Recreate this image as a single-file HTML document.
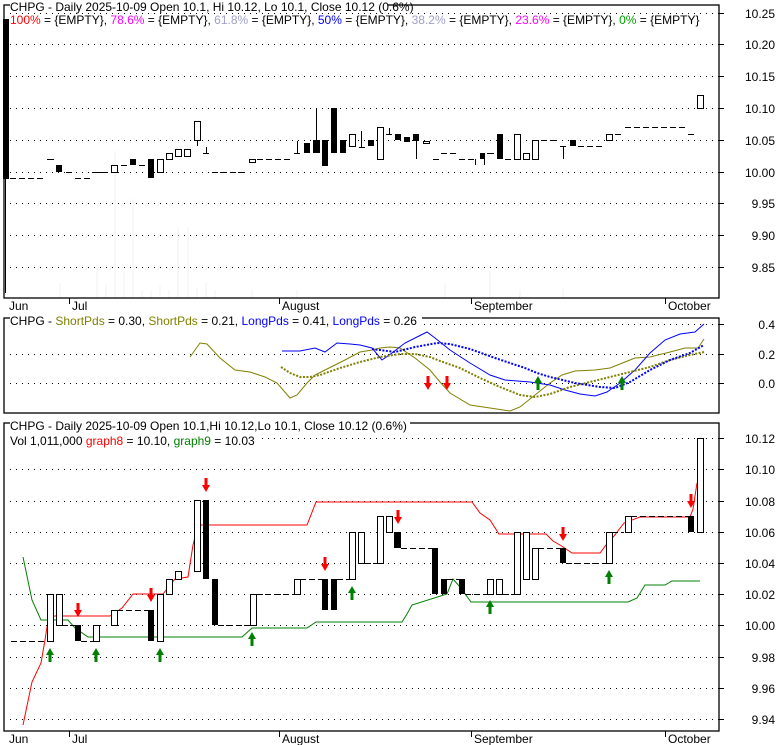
<!DOCTYPE html>
<html><head><meta charset="utf-8"><style>
html,body{margin:0;padding:0;background:#fff;}
svg{display:block;font-family:"Liberation Sans",Arial,sans-serif;font-size:12px;}
</style></head><body>
<svg width="780" height="745" viewBox="0 0 780 745" xmlns="http://www.w3.org/2000/svg">
<rect width="780" height="745" fill="#fff"/>
<g stroke="#000" stroke-width="1" stroke-dasharray="1 5" fill="none">
<line x1="10" y1="13.5" x2="719" y2="13.5"/>
<line x1="10" y1="44.5" x2="719" y2="44.5"/>
<line x1="10" y1="76.5" x2="719" y2="76.5"/>
<line x1="10" y1="108.5" x2="719" y2="108.5"/>
<line x1="10" y1="140.5" x2="719" y2="140.5"/>
<line x1="10" y1="172.5" x2="719" y2="172.5"/>
<line x1="10" y1="203.5" x2="719" y2="203.5"/>
<line x1="10" y1="235.5" x2="719" y2="235.5"/>
<line x1="10" y1="267.5" x2="719" y2="267.5"/>
<line x1="10" y1="324.5" x2="719" y2="324.5"/>
<line x1="10" y1="354.5" x2="719" y2="354.5"/>
<line x1="10" y1="383.5" x2="719" y2="383.5"/>
<line x1="10" y1="438.5" x2="719" y2="438.5"/>
<line x1="10" y1="469.5" x2="719" y2="469.5"/>
<line x1="10" y1="501.5" x2="719" y2="501.5"/>
<line x1="10" y1="532.5" x2="719" y2="532.5"/>
<line x1="10" y1="563.5" x2="719" y2="563.5"/>
<line x1="10" y1="594.5" x2="719" y2="594.5"/>
<line x1="10" y1="625.5" x2="719" y2="625.5"/>
<line x1="10" y1="657.5" x2="719" y2="657.5"/>
<line x1="10" y1="688.5" x2="719" y2="688.5"/>
<line x1="10" y1="719.5" x2="719" y2="719.5"/>
</g>
<!-- volume -->
<g stroke="#f0f0f0" stroke-width="1">
<line x1="60" y1="283" x2="60" y2="298"/><line x1="97" y1="265" x2="97" y2="298"/><line x1="106" y1="285" x2="106" y2="298"/>
<line x1="115" y1="151" x2="115" y2="298"/><line x1="124" y1="271" x2="124" y2="298"/><line x1="133" y1="199" x2="133" y2="298"/>
<line x1="142" y1="290" x2="142" y2="298"/><line x1="151" y1="291" x2="151" y2="298"/><line x1="160" y1="286" x2="160" y2="298"/>
<line x1="169" y1="290" x2="169" y2="298"/><line x1="178" y1="227" x2="178" y2="298"/><line x1="188" y1="227" x2="188" y2="298"/>
<line x1="197" y1="288" x2="197" y2="298"/><line x1="206" y1="282" x2="206" y2="298"/><line x1="215" y1="290" x2="215" y2="298"/>
<line x1="252" y1="289" x2="252" y2="298"/><line x1="297" y1="290" x2="297" y2="298"/><line x1="445" y1="283" x2="445" y2="298"/>
<line x1="490" y1="271" x2="490" y2="298"/><line x1="520" y1="290" x2="520" y2="298"/><line x1="563" y1="289" x2="563" y2="298"/>
</g>
<!-- panel borders -->
<g stroke="#000" fill="none" stroke-width="1.3">
<rect x="4" y="5" width="715" height="293"/>
<rect x="4" y="318" width="715" height="95"/>
<rect x="4" y="423" width="715" height="308"/>
</g>
<g stroke="#000">
<line x1="719" y1="13.5" x2="724" y2="13.5"/><line x1="719" y1="44.5" x2="724" y2="44.5"/><line x1="719" y1="76.5" x2="724" y2="76.5"/><line x1="719" y1="108.5" x2="724" y2="108.5"/><line x1="719" y1="140.5" x2="724" y2="140.5"/><line x1="719" y1="172.5" x2="724" y2="172.5"/><line x1="719" y1="203.5" x2="724" y2="203.5"/><line x1="719" y1="235.5" x2="724" y2="235.5"/><line x1="719" y1="267.5" x2="724" y2="267.5"/>
<line x1="719" y1="324.5" x2="724" y2="324.5"/><line x1="719" y1="354.5" x2="724" y2="354.5"/><line x1="719" y1="383.5" x2="724" y2="383.5"/>
<line x1="719" y1="438.5" x2="724" y2="438.5"/><line x1="719" y1="469.5" x2="724" y2="469.5"/><line x1="719" y1="501.5" x2="724" y2="501.5"/><line x1="719" y1="532.5" x2="724" y2="532.5"/><line x1="719" y1="563.5" x2="724" y2="563.5"/><line x1="719" y1="594.5" x2="724" y2="594.5"/><line x1="719" y1="625.5" x2="724" y2="625.5"/><line x1="719" y1="657.5" x2="724" y2="657.5"/><line x1="719" y1="688.5" x2="724" y2="688.5"/><line x1="719" y1="719.5" x2="724" y2="719.5"/>
<line x1="69.5" y1="298" x2="69.5" y2="304"/><line x1="279.5" y1="298" x2="279.5" y2="304"/><line x1="471.5" y1="298" x2="471.5" y2="304"/><line x1="665.5" y1="298" x2="665.5" y2="304"/>
<line x1="69.5" y1="731" x2="69.5" y2="737"/><line x1="279.5" y1="731" x2="279.5" y2="737"/><line x1="471.5" y1="731" x2="471.5" y2="737"/><line x1="665.5" y1="731" x2="665.5" y2="737"/>
</g>
<!-- TOP CANDLES -->
<g stroke="#000" stroke-width="1">
<line x1="5.5" y1="19" x2="5.5" y2="293"/>
<line x1="294" y1="153.5" x2="300" y2="153.5"/><line x1="297.5" y1="141" x2="297.5" y2="153"/>
<line x1="316.5" y1="108" x2="316.5" y2="140"/>
<line x1="359" y1="147.5" x2="365" y2="147.5"/><line x1="361.5" y1="131" x2="361.5" y2="147"/>
<line x1="386" y1="134.5" x2="392" y2="134.5"/><line x1="389.5" y1="128" x2="389.5" y2="134"/>
<line x1="416.5" y1="141" x2="416.5" y2="159"/>
<line x1="203" y1="153.5" x2="209" y2="153.5"/><line x1="206.5" y1="147" x2="206.5" y2="153"/>
<line x1="197.5" y1="140" x2="197.5" y2="146"/>
<line x1="475.5" y1="159" x2="475.5" y2="165"/><line x1="484.5" y1="159" x2="484.5" y2="165"/>
<line x1="563.5" y1="146" x2="563.5" y2="159"/>
<g stroke-dasharray="6 3">
<line x1="10" y1="178.5" x2="45" y2="178.5"/>
<line x1="75" y1="178.5" x2="90" y2="178.5"/>
<line x1="212" y1="172.5" x2="245" y2="172.5"/>
<line x1="257" y1="159.5" x2="292" y2="159.5"/>
<line x1="441" y1="153.5" x2="456" y2="153.5"/>
<line x1="459" y1="159.5" x2="475" y2="159.5"/>
<line x1="541" y1="140.5" x2="557" y2="140.5"/>
<line x1="578" y1="146.5" x2="603" y2="146.5"/>
<line x1="625" y1="127.5" x2="686" y2="127.5"/>
</g>
<line x1="47" y1="159.5" x2="54" y2="159.5"/>
<line x1="66" y1="172.5" x2="72" y2="172.5"/>
<line x1="92" y1="172.5" x2="108" y2="172.5"/>
<line x1="121" y1="165.5" x2="127" y2="165.5"/>
<line x1="139" y1="165.5" x2="145" y2="165.5"/>
<line x1="433" y1="159.5" x2="439" y2="159.5"/>
<line x1="487" y1="153.5" x2="494" y2="153.5"/>
<line x1="505" y1="159.5" x2="511" y2="159.5"/>
<line x1="560" y1="146.5" x2="566" y2="146.5"/>
<line x1="615" y1="134.5" x2="621" y2="134.5"/>
<line x1="688" y1="134.5" x2="694" y2="134.5"/>
</g>
<g fill="#000">
<rect x="3" y="19" width="6" height="160"/>
<rect x="56" y="165" width="6" height="7"/>
<rect x="130" y="159" width="6" height="6"/>
<rect x="148" y="159" width="6" height="19"/>
<rect x="304" y="143" width="6" height="10"/>
<rect x="313" y="140" width="7" height="13"/>
<rect x="322" y="140" width="6" height="26"/>
<rect x="331" y="108" width="6" height="45"/>
<rect x="340" y="140" width="6" height="13"/>
<rect x="368" y="140" width="6" height="6"/>
<rect x="395" y="134" width="6" height="6"/>
<rect x="404" y="137" width="6" height="5"/>
<rect x="413" y="134" width="6" height="7"/>
<rect x="480" y="153" width="5" height="6"/>
<rect x="497" y="134" width="6" height="25"/>
<rect x="570" y="140" width="6" height="6"/>
</g>
<g fill="#fff" stroke="#000" stroke-width="1">
<rect x="111.5" y="165.5" width="6" height="7"/>
<rect x="157.5" y="159.5" width="6" height="13"/>
<rect x="166.5" y="153.5" width="6" height="6"/>
<rect x="175.5" y="149.5" width="6" height="7"/>
<rect x="184.5" y="149.5" width="6" height="7"/>
<rect x="194.5" y="121.5" width="6" height="19"/>
<rect x="249.5" y="159.5" width="6" height="3"/>
<rect x="349.5" y="134.5" width="6" height="12"/>
<rect x="377.5" y="127.5" width="6" height="32"/>
<rect x="423.5" y="141.5" width="6" height="2"/>
<rect x="514.5" y="134.5" width="6" height="25"/>
<rect x="523.5" y="153.5" width="6" height="6"/>
<rect x="532.5" y="140.5" width="6" height="19"/>
<rect x="606.5" y="134.5" width="6" height="6"/>
<rect x="697.5" y="95.5" width="6" height="13"/>
</g>
<!-- MIDDLE PANEL -->
<g fill="none" stroke-width="1">
<polyline stroke="#808000" points="190,357 200,343 207,344 220,358 235,370 250,372 265,377 277,383 290,398 297,395 307,383 315,375 325,370 335,365 345,360 360,352 372,350 380,348 390,347 400,348 415,358 430,370 440,382 450,393 470,405 490,408 510,411 520,407 535,395 550,383 562,375 575,371 595,370 610,368 625,362 635,358 650,357 670,352 685,348 698,348 704,339"/>
<polyline stroke="#0000ff" points="282,351 300,351 315,348 325,352 337,343 350,344 360,345 372,348 382,360 392,353 405,343 417,337 427,332 435,338 450,350 470,363 490,375 505,380 530,382 550,385 565,390 580,394 595,396 607,392 620,383 635,370 650,353 665,340 680,334 695,332 704,324"/>
<polyline stroke="#808000" stroke-width="2" stroke-dasharray="2 1.5" points="281,367 290,373 300,377 310,377 320,375 340,368 360,362 380,357 400,354 415,354 430,357 440,361 460,368 480,378 500,387 520,395 535,397 550,394 570,387 590,382 610,377 630,372 650,367 670,360 690,355 704,352"/>
<polyline stroke="#0000ff" stroke-width="2" stroke-dasharray="2 1.5" points="372,349 395,352 415,347 437,343 450,344 470,349 495,358 525,368 537,373 550,377 575,383 600,387 615,388 630,382 650,370 670,360 690,353 704,345"/>
</g>
<!-- BOTTOM PANEL lines -->
<g fill="none" stroke-width="1">
<polyline stroke="#ff0000" points="23,725 32,682 41,663 45,640 47,627 50,616 110,616 122,608 133,594 163,594 175,579 188,577 193,545 198,525 209,525 307,525 316,502 472,502 480,513 490,520 499,534 546,534 553,541 560,545 572,553 600,553 606,545 614,536 624,523 640,517 690,517 693,509 697,483"/>
<polyline stroke="#008000" points="23,557 32,600 41,620 68,620 75,628 88,637 242,637 252,628 307,628 316,622 402,622 407,614 412,605 447,594 453,579 460,587 471,602 628,602 637,598 645,585 665,585 672,581 700,581"/>
</g>
<g stroke="#000" stroke-width="1" stroke-dasharray="6 3">
<line x1="11" y1="641.5" x2="45" y2="641.5"/>
<line x1="62" y1="625.5" x2="75" y2="625.5"/>
<line x1="81" y1="641.5" x2="93" y2="641.5"/>
<line x1="117" y1="610.5" x2="148" y2="610.5"/>
<line x1="218" y1="625.5" x2="250" y2="625.5"/>
<line x1="256" y1="594.5" x2="294" y2="594.5"/>
<line x1="300" y1="579.5" x2="322" y2="579.5"/>
<line x1="337" y1="579.5" x2="349" y2="579.5"/>
<line x1="364" y1="563.5" x2="377" y2="563.5"/>
<line x1="401" y1="548.5" x2="432" y2="548.5"/>
<line x1="447" y1="579.5" x2="459" y2="579.5"/>
<line x1="465" y1="594.5" x2="487" y2="594.5"/>
<line x1="502" y1="594.5" x2="514" y2="594.5"/>
<line x1="538" y1="548.5" x2="560" y2="548.5"/>
<line x1="566" y1="563.5" x2="606" y2="563.5"/>
<line x1="612" y1="532.5" x2="624" y2="532.5"/>
<line x1="631" y1="516.5" x2="688" y2="516.5"/>
</g>
<g fill="#000">
<rect x="75" y="625" width="6" height="16"/>
<rect x="148" y="610" width="6" height="31"/>
<rect x="203" y="500" width="6" height="79"/>
<rect x="212" y="579" width="6" height="46"/>
<rect x="322" y="579" width="6" height="31"/>
<rect x="331" y="579" width="6" height="31"/>
<rect x="394" y="532" width="7" height="16"/>
<rect x="432" y="548" width="6" height="46"/>
<rect x="441" y="579" width="6" height="15"/>
<rect x="459" y="579" width="6" height="15"/>
<rect x="560" y="548" width="6" height="15"/>
<rect x="688" y="516" width="6" height="16"/>
</g>
<g fill="#fff" stroke="#000" stroke-width="1">
<rect x="47.5" y="594.5" width="6" height="47"/>
<rect x="56.5" y="594.5" width="6" height="31"/>
<rect x="93.5" y="625.5" width="6" height="16"/>
<rect x="111.5" y="610.5" width="6" height="15"/>
<rect x="157.5" y="594.5" width="6" height="47"/>
<rect x="166.5" y="579.5" width="6" height="15"/>
<rect x="175.5" y="571.5" width="6" height="8"/>
<rect x="194.5" y="500.5" width="6" height="71"/>
<rect x="250.5" y="594.5" width="6" height="31"/>
<rect x="294.5" y="579.5" width="6" height="15"/>
<rect x="349.5" y="532.5" width="6" height="47"/>
<rect x="358.5" y="532.5" width="6" height="31"/>
<rect x="377.5" y="516.5" width="6" height="47"/>
<rect x="386.5" y="516.5" width="6" height="16"/>
<rect x="487.5" y="579.5" width="6" height="15"/>
<rect x="496.5" y="579.5" width="6" height="15"/>
<rect x="514.5" y="532.5" width="6" height="62"/>
<rect x="523.5" y="532.5" width="6" height="47"/>
<rect x="532.5" y="548.5" width="6" height="31"/>
<rect x="606.5" y="532.5" width="6" height="31"/>
<rect x="625.5" y="516.5" width="6" height="16"/>
<rect x="697.5" y="438.5" width="6" height="94"/>
</g>
<!-- arrows -->
<defs>
<path id="dn" d="M-1.5,0 H1.5 V7 H4 L0,14 L-4,7 H-1.5 Z"/>
<path id="up" d="M-1.5,14 H1.5 V7 H4 L0,0 L-4,7 H-1.5 Z"/>
</defs>
<g fill="#ff0000">
<use href="#dn" x="78" y="603"/><use href="#dn" x="151" y="588"/><use href="#dn" x="206" y="478"/>
<use href="#dn" x="325" y="557"/><use href="#dn" x="398" y="510"/><use href="#dn" x="563" y="527"/>
<use href="#dn" x="691" y="494"/>
<use href="#dn" x="428" y="376"/><use href="#dn" x="447" y="376"/>
</g>
<g fill="#008000">
<use href="#up" x="50" y="648"/><use href="#up" x="96" y="648"/><use href="#up" x="160" y="648"/>
<use href="#up" x="252" y="632"/><use href="#up" x="352" y="586"/><use href="#up" x="490" y="600"/>
<use href="#up" x="609" y="570"/>
<use href="#up" x="538" y="376"/><use href="#up" x="622" y="376"/>
</g>
<!-- legends -->
<rect x="10" y="0" width="378" height="13" fill="#fff"/>
<text x="10" y="11"><tspan>CHPG - Daily 2025-10-09 Open 10.1, Hi 10.12, Lo 10.1, Close 10.12 (0.6%)</tspan></text>
<rect x="10" y="14" width="690" height="13" fill="#fff"/>
<text x="10" y="24"><tspan fill="#ff0000">100%</tspan> = {EMPTY}, <tspan fill="#ff00ff">78.6%</tspan> = {EMPTY}, <tspan fill="#a0a0c8">61.8%</tspan> = {EMPTY}, <tspan fill="#0000ff">50%</tspan> = {EMPTY}, <tspan fill="#a0a0c8">38.2%</tspan> = {EMPTY}, <tspan fill="#ff00ff">23.6%</tspan> = {EMPTY}, <tspan fill="#00a000">0%</tspan> = {EMPTY}</text>
<rect x="10" y="313" width="412" height="14" fill="#fff"/>
<text x="10" y="325">CHPG - <tspan fill="#808000">ShortPds</tspan> = 0.30, <tspan fill="#808000">ShortPds</tspan> = 0.21, <tspan fill="#0000ff">LongPds</tspan> = 0.41, <tspan fill="#0000ff">LongPds</tspan> = 0.26</text>
<rect x="10" y="418" width="400" height="13" fill="#fff"/>
<text x="10" y="430">CHPG - Daily 2025-10-09 Open 10.1,Hi 10.12,Lo 10.1, Close 10.12 (0.6%)</text>
<rect x="10" y="433" width="252" height="13" fill="#fff"/>
<text x="10" y="445">Vol 1,011,000 <tspan fill="#ff0000">graph8</tspan> = 10.10, <tspan fill="#008000">graph9</tspan> = 10.03</text>
<!-- axis labels -->
<g text-anchor="end">
<text x="775" y="18">10.25</text><text x="775" y="49">10.20</text><text x="775" y="81">10.15</text><text x="775" y="113">10.10</text><text x="775" y="145">10.05</text><text x="775" y="177">10.00</text><text x="775" y="208">9.95</text><text x="775" y="240">9.90</text><text x="775" y="272">9.85</text>
<text x="775" y="329">0.4</text><text x="775" y="359">0.2</text><text x="775" y="388">0.0</text>
<text x="775" y="443">10.12</text><text x="775" y="474">10.10</text><text x="775" y="506">10.08</text><text x="775" y="537">10.06</text><text x="775" y="568">10.04</text><text x="775" y="599">10.02</text><text x="775" y="630">10.00</text><text x="775" y="662">9.98</text><text x="775" y="693">9.96</text><text x="775" y="724">9.94</text>
</g>
<text x="9" y="310">Jun</text><text x="72" y="310">Jul</text><text x="282" y="310">August</text><text x="474" y="310">September</text><text x="668" y="310">October</text>
<text x="9" y="743">Jun</text><text x="72" y="743">Jul</text><text x="282" y="743">August</text><text x="474" y="743">September</text><text x="668" y="743">October</text>
</svg>
</body></html>
